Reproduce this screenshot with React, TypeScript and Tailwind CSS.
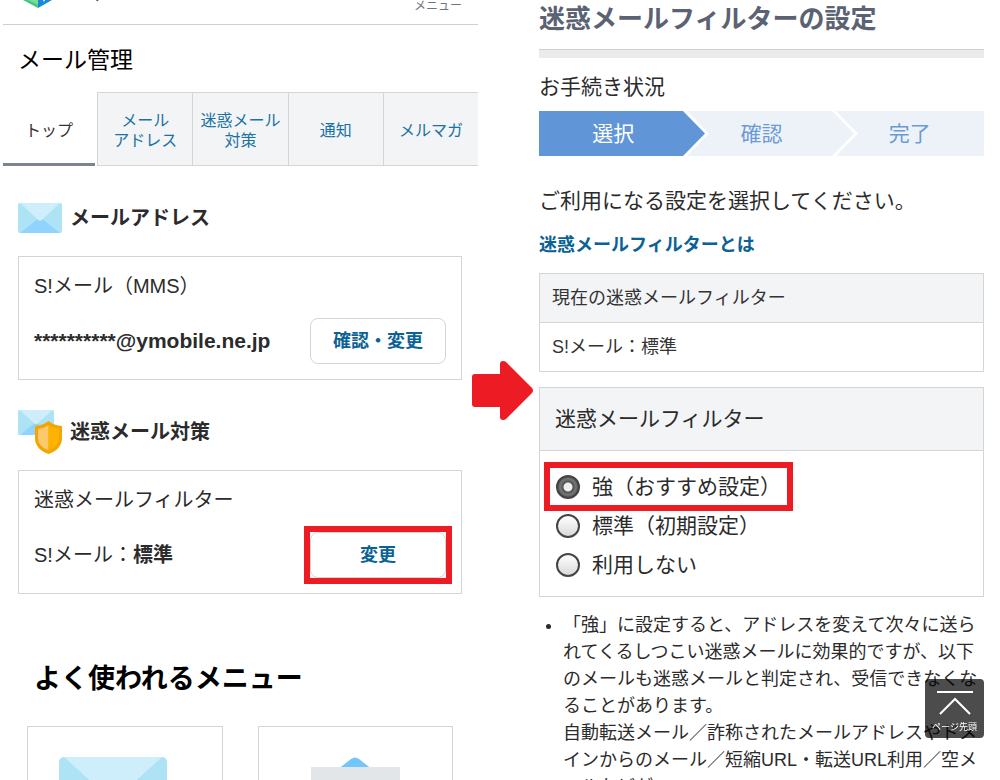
import React, { useState } from 'react';

const tabs = [['トップ'], ['メール', 'アドレス'], ['迷惑メール', '対策'], ['通知'], ['メルマガ']];

const options = [
  { id: 'strong', label: '強（おすすめ設定）' },
  { id: 'standard', label: '標準（初期設定）' },
  { id: 'off', label: '利用しない' },
];

function MailIcon() {
  return (
    <svg viewBox="0 0 44 30" className="w-11 h-[30px]" aria-hidden="true">
      <rect width="44" height="30" rx="2" fill="#ade3f4"/>
      <path d="M2 30L22 14L42 30Z" fill="#90d3ff"/>
      <path d="M2 0H42L24.500 16.500Q22 19 19.500 16.500Z" fill="#cdeefa"/>
    </svg>
  );
}

function ShieldMailIcon() {
  return (
    <svg viewBox="0 0 44 44" className="w-11 h-11" aria-hidden="true">
      <rect width="36" height="25" rx="1.500" fill="#ade3f4"/>
      <path d="M2 25L18 12L34 25Z" fill="#90d3ff"/>
      <path d="M1.500 0H34.500L19.500 13.500Q18 15 16.500 13.500Z" fill="#cdeefa"/>
      <path d="M30.500 11Q36 15.500 44 16V28Q44 39 30.500 44Q17 39 17 28V16Q25 15.500 30.500 11Z" fill="#f5a503"/>
      <path d="M30.500 15Q26 18.500 20 19V28Q20 36.500 30.500 40.500Z" fill="#fdc96d"/>
      <path d="M30.500 15Q35 18.500 41 19V28Q41 36.500 30.500 40.500Z" fill="#ffb300"/>
    </svg>
  );
}

function StepArrow({ fill }: { fill: string }) {
  return (
    <svg viewBox="0 0 28 45" className="absolute left-full top-0 -ml-1 w-7 h-full z-10" preserveAspectRatio="none" aria-hidden="true">
      <path d="M0 0H4L26 22.500L4 45H0Z" fill="#fff"/>
      <path d="M0 0L22 22.500L0 45Z" fill={fill}/>
    </svg>
  );
}

function MailManagement() {
  return (
    <section className="pl-0.5 min-w-0">
      <header className="h-[25px] ml-px pl-5 pr-4 flex items-start justify-between overflow-hidden border-b border-[#cfcfcf]">
        <svg viewBox="0 0 80 12" className="w-20 h-3" aria-hidden="true">
          <path d="M0 0L15 8V0Z" fill="#42c58c"/>
          <path d="M5 0H15V5Z" fill="#7edb91"/>
          <path d="M15 8L29 0H15Z" fill="#1689d8"/>
          <path d="M20 0H22L21 2Z" fill="#fff"/>
          <path d="M73 0H76L74 1.500Z" fill="#555"/>
        </svg>
        <button type="button" className="text-xs leading-3 text-[#6b7480]">メニュー</button>
      </header>

      <h1 className="pl-4 mt-[15px] text-[23px] leading-10 text-black">メール管理</h1>

      <nav className="mt-3 grid grid-cols-5 h-[74px]">
        {tabs.map((lines, i) => (
          <a key={i} href="#" className={i === 0
            ? 'pt-1.5 flex flex-col items-center justify-center mr-0.5 ml-px border-b-[3px] border-[#7a8591] text-base leading-5 text-[#333]'
            : 'pt-[3px] flex flex-col items-center justify-center whitespace-nowrap border-l border-y border-[#d3d5d7] bg-[#f3f4f6] text-base leading-5 text-[#1a72a3]'}>
            {lines.map((line) => <span key={line}>{line}</span>)}
          </a>
        ))}
      </nav>

      <div className="px-4">
        <div className="mt-[30px] h-11 flex items-center gap-2">
          <MailIcon/>
          <h2 className="text-xl leading-8 font-bold">メールアドレス</h2>
        </div>
        <div className="mt-4 border border-[#d5d5d5] px-[15px] pt-[13px] pb-[15px]">
          <p className="text-xl leading-8">S!メール（MMS）</p>
          <div className="mt-4 flex items-center justify-between">
            <p className="text-[21px] leading-8 font-bold">**********@ymobile.ne.jp</p>
            <button type="button" className="w-[136px] h-[46px] rounded-lg border border-[#d5d5d5] bg-white text-lg font-bold text-[#0b6294]">確認・変更</button>
          </div>
        </div>

        <div className="mt-[30px] h-11 flex items-center gap-2">
          <ShieldMailIcon/>
          <h2 className="text-xl leading-8 font-bold">迷惑メール対策</h2>
        </div>
        <div className="mt-4 border border-[#d5d5d5] px-[15px] pt-[13px] pb-[15px]">
          <p className="text-xl leading-8">迷惑メールフィルター</p>
          <div className="mt-4 flex items-center justify-between">
            <p className="text-xl leading-8">S!メール：<b>標準</b></p>
            <div className="relative">
              <button type="button" className="w-[136px] h-[46px] rounded-lg border border-[#d5d5d5] bg-white text-lg font-bold text-[#0b6294]">変更</button>
              <span className="absolute -inset-1.5 border-[6px] border-[#ed1c24] pointer-events-none"/>
            </div>
          </div>
        </div>

        <h2 className="mt-[65px] pl-4 text-[27px] leading-10 font-bold text-black">よく使われるメニュー</h2>
        <div className="mt-[27px] px-[9px] grid grid-cols-2 gap-[35px]">
          <a href="#" aria-label="メール" className="border border-[#d5d5d5] h-[196px] pt-[30px] pl-[31px]">
            <svg viewBox="0 0 108 76" className="w-[108px] h-[76px]" aria-hidden="true">
              <rect width="108" height="76" rx="5" fill="#ade3f4"/>
              <path d="M5 76L54 38L103 76Z" fill="#90d3ff"/>
              <path d="M5 0H103L58 41Q54 45 50 41Z" fill="#cdeefa"/>
            </svg>
          </a>
          <a href="#" aria-label="お知らせ" className="border border-[#d5d5d5] h-[196px] pt-[30px] flex justify-center items-start">
            <svg viewBox="0 0 108 86" className="w-[108px] h-[86px]" aria-hidden="true">
              <path d="M4 38L50 2Q54 -1 58 2L104 38V86H4Z" fill="#72c6fb"/>
              <rect x="10" y="10" width="89" height="70" fill="#e3e6e9"/>
            </svg>
          </a>
        </div>
      </div>
    </section>
  );
}

function FilterSettings() {
  const [selected, setSelected] = useState('strong');

  return (
    <section className="min-w-0">
      <h1 className="pt-px text-[26px] leading-9 font-bold text-[#5b6274] whitespace-nowrap">迷惑メールフィルターの設定</h1>
      <div className="mt-3 h-[9px] border-t border-[#cfcfcf] bg-[#ebebeb]"/>

      <p className="mt-[13px] text-[21px] leading-8">お手続き状況</p>
      <ol className="mt-2 grid grid-cols-3 h-[45px] text-[21px] leading-[45px] text-center overflow-hidden">
        <li className="relative bg-[#6096d7] text-white">選択<StepArrow fill="#6096d7"/></li>
        <li className="relative bg-[#edf2f9] text-[#6c9ad5]">確認<StepArrow fill="#edf2f9"/></li>
        <li className="bg-[#edf2f9] text-[#6c9ad5]">完了</li>
      </ol>

      <p className="mt-[29px] text-[21px] leading-8 whitespace-nowrap">ご利用になる設定を選択してください。</p>
      <a href="#" className="mt-3.5 block text-lg leading-7 font-bold text-[#0b6294]">迷惑メールフィルターとは</a>

      <table className="mt-3.5 w-full border border-[#d3d5d7] text-lg text-left text-[#333]">
        <tbody>
          <tr><th scope="col" className="h-[49px] px-3 font-normal bg-[#f3f4f6] border-b border-[#d3d5d7]">現在の迷惑メールフィルター</th></tr>
          <tr><td className="h-[49px] px-3">S!メール：標準</td></tr>
        </tbody>
      </table>

      <div role="radiogroup" aria-labelledby="filter-title" className="mt-[15px] border border-[#d3d5d7]">
        <h2 id="filter-title" className="h-[63px] px-[15px] text-[21px] leading-[62px] bg-[#f3f4f6] border-b border-[#d3d5d7]">迷惑メールフィルター</h2>
        <div className="pl-4 pt-4 pb-3">
          {options.map((o) => (
            <div key={o.id} className="relative w-fit h-[39px] flex items-center gap-3 text-[21px]">
              <input type="radio" id={o.id} name="filter" checked={selected === o.id} onChange={() => setSelected(o.id)}
                className="appearance-none w-6 h-6 rounded-full border-2 border-[#444] bg-[linear-gradient(#fff,#d9d9d9)] checked:bg-[radial-gradient(circle,#eee_0,#eee_4px,#505050_5px,#777_8px,#444_11px)]"/>
              <label htmlFor={o.id}>{o.label}</label>
              {o.id === 'strong' && (
                <span className="absolute -inset-y-[5px] -inset-x-3 border-[6px] border-[#ed1c24] pointer-events-none"/>
              )}
            </div>
          ))}
        </div>
      </div>

      <ul className="mt-[15px] pl-6 list-disc text-lg leading-[27px]">
        <li>
          「強」に設定すると、アドレスを変えて次々に送られてくるしつこい迷惑メールに効果的ですが、以下のメールも迷惑メールと判定され、受信できなくなることがあります。<br/>
          自動転送メール／詐称されたメールアドレスやドメインからのメール／短縮URL・転送URL利用／空メールなどが
        </li>
      </ul>
    </section>
  );
}

export default function App() {
  return (
    <main lang="ja" className="h-screen overflow-hidden bg-white text-[#2b2b2b] font-['Liberation_Sans','Noto_Sans_CJK_JP',sans-serif]">
      <div className="grid grid-cols-[478fr_61fr_445fr] pr-4">
        <MailManagement/>
        <div className="relative">
          <svg viewBox="0 0 61 61" className="absolute top-[360px] -left-1.5 w-[61px] h-[61px]" aria-hidden="true">
            <path d="M3 14H28V4Q28 1 31 1Q33 1 34 2L60 28Q62 30.500 60 33L34 59Q33 60 31 60Q28 60 28 57V47H3Q0 47 0 44V17Q0 14 3 14Z" fill="#ed1c24"/>
          </svg>
        </div>
        <FilterSettings/>
      </div>

      {/* Back to top */}
      <button type="button" onClick={() => window.scrollTo(0, 0)}
        className="fixed right-4 bottom-[42px] w-[59px] h-[59px] rounded-sm bg-black/70 flex flex-col items-center text-white">
        <svg viewBox="0 0 36 26" className="mt-3 w-9 h-[26px]" fill="none" stroke="#fff" strokeWidth="2" aria-hidden="true">
          <path d="M0 1H36M3 23L18 8L33 23"/>
        </svg>
        <span className="mt-1 text-[9px] leading-3">ページ先頭</span>
      </button>
    </main>
  );
}
